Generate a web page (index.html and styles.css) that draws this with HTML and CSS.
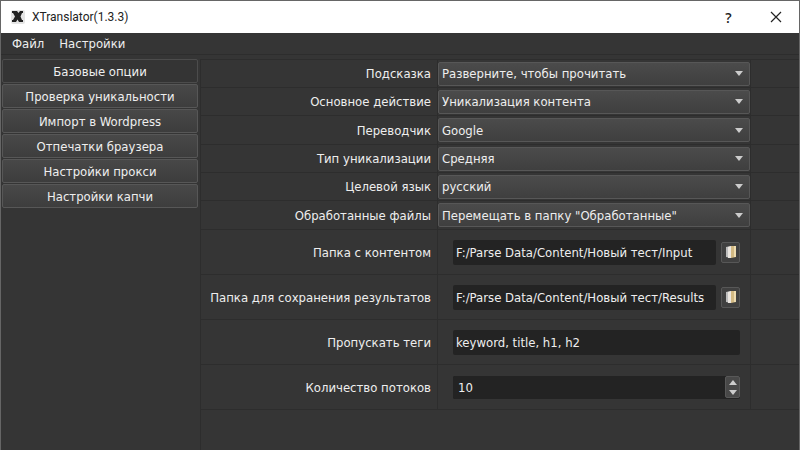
FILE: index.html
```html
<!DOCTYPE html>
<html lang="ru">
<head>
    <meta charset="UTF-8">
    <title>XTranslator(1.3.3)</title>
    <link rel="stylesheet" href="styles.css">
</head>
<body>
    <header class="titlebar">
        <svg class="logo" viewBox="0 0 14 14" aria-hidden="true">
            <rect width="14" height="14" rx="2" fill="#e4e4e4"/>
            <path d="M1 1h5l1.500 2L9 1h3v2h-1L9.500 6.500 11 10h1v2H8L6.500 9.500 5 12H1v-2h1l2-3.500L2 3H1z" fill="#222"/>
        </svg>
        <h1 class="title">XTranslator(1.3.3)</h1>
        <button class="window-button help" type="button">?</button>
        <button class="window-button" type="button" aria-label="Закрыть">
            <svg width="12" height="12" viewBox="0 0 12 12" aria-hidden="true">
                <path d="M1 1l10 10M11 1L1 11" stroke="#222" stroke-width="1.200"/>
            </svg>
        </button>
    </header>

    <nav class="menu">
        <button type="button">Файл</button>
        <button type="button">Настройки</button>
    </nav>

    <main class="content">
        <nav class="sidebar">
            <button class="tab active" type="button">Базовые опции</button>
            <button class="tab" type="button">Проверка уникальности</button>
            <button class="tab" type="button">Импорт в Wordpress</button>
            <button class="tab" type="button">Отпечатки браузера</button>
            <button class="tab" type="button">Настройки прокси</button>
            <button class="tab" type="button">Настройки капчи</button>
        </nav>

        <form class="options">
            <div class="row">
                <label for="hint">Подсказка</label>
                <div class="cell"><select id="hint"><option>Разверните, чтобы прочитать</option></select></div>
            </div>
            <div class="row">
                <label for="action">Основное действие</label>
                <div class="cell"><select id="action"><option>Уникализация контента</option></select></div>
            </div>
            <div class="row">
                <label for="translator">Переводчик</label>
                <div class="cell"><select id="translator"><option>Google</option></select></div>
            </div>
            <div class="row">
                <label for="level">Тип уникализации</label>
                <div class="cell"><select id="level"><option>Средняя</option></select></div>
            </div>
            <div class="row">
                <label for="lang">Целевой язык</label>
                <div class="cell"><select id="lang"><option>русский</option></select></div>
            </div>
            <div class="row">
                <label for="processed">Обработанные файлы</label>
                <div class="cell"><select id="processed"><option>Перемещать в папку "Обработанные"</option></select></div>
            </div>
            <div class="row tall">
                <label for="input">Папка с контентом</label>
                <div class="cell">
                    <input id="input" type="text" value="F:/Parse Data/Content/Новый тест/Input">
                    <button class="browse" type="button" aria-label="Выбрать папку">
                        <svg width="12" height="14" viewBox="0 0 12 14" aria-hidden="true">
                            <path d="M1 2l5-1v12l-5-1z" fill="#bdbdbd"/>
                            <path d="M3 2l3-1v12H3z" fill="#ebe6e0"/>
                            <path d="M6 1h5v11l-5 1z" fill="#d2b983"/>
                            <path d="M9 1h2v11H9z" fill="#eedcb0"/>
                        </svg>
                    </button>
                </div>
            </div>
            <div class="row tall">
                <label for="output">Папка для сохранения результатов</label>
                <div class="cell">
                    <input id="output" type="text" value="F:/Parse Data/Content/Новый тест/Results">
                    <button class="browse" type="button" aria-label="Выбрать папку">
                        <svg width="12" height="14" viewBox="0 0 12 14" aria-hidden="true">
                            <path d="M1 2l5-1v12l-5-1z" fill="#bdbdbd"/>
                            <path d="M3 2l3-1v12H3z" fill="#ebe6e0"/>
                            <path d="M6 1h5v11l-5 1z" fill="#d2b983"/>
                            <path d="M9 1h2v11H9z" fill="#eedcb0"/>
                        </svg>
                    </button>
                </div>
            </div>
            <div class="row tall">
                <label for="tags">Пропускать теги</label>
                <div class="cell"><input id="tags" type="text" value="keyword, title, h1, h2"></div>
            </div>
            <div class="row tall">
                <label for="threads">Количество потоков</label>
                <div class="cell">
                    <div class="spinner">
                        <input id="threads" type="number" min="1" value="10">
                        <div class="steps">
                            <button type="button" aria-label="Больше" onclick="threads.stepUp()">
                                <svg width="8" height="5" viewBox="0 0 8 5" aria-hidden="true"><path d="M4 0l4 5H0z" fill="#ccc"/></svg>
                            </button>
                            <button type="button" aria-label="Меньше" onclick="threads.stepDown()">
                                <svg width="8" height="5" viewBox="0 0 8 5" aria-hidden="true"><path d="M0 0h8L4 5z" fill="#ccc"/></svg>
                            </button>
                        </div>
                    </div>
                </div>
            </div>
        </form>
    </main>
</body>
</html>
```
FILE: styles.css
```css
* {
    box-sizing: border-box;
}
body {
    display: flex;
    flex-direction: column;
    min-height: 100vh;
    margin: 0;
    border: solid #666;
    border-width: 1px 1px 0 1px;
    background: #353535;
    color: #eee;
    font-family: "DejaVu Sans Condensed", "DejaVu Sans", sans-serif;
    font-size: 13px;
}
button, input, select {
    color: inherit;
    font: inherit;
}
button {
    padding: 0;
    border: none;
    background: none;
}

/* title bar */
.titlebar {
    display: flex;
    align-items: center;
    height: 32px;
    padding-left: 10px;
    background: #fff;
    color: #222;
}
.logo {
    width: 14px;
    height: 14px;
}
.title {
    flex: 1;
    margin: 0 0 0 7px;
    font-family: Roboto, sans-serif;
    font-size: 12px;
    font-weight: normal;
}
.window-button {
    display: flex;
    align-items: center;
    justify-content: center;
    width: 47px;
    height: 32px;
}
.help {
    font-family: "Open Sans", sans-serif;
    font-size: 14px;
    font-weight: 600;
}

/* menu */
.menu {
    display: flex;
    gap: 15px;
    height: 22px;
    padding: 0 11px;
    border-bottom: 1px solid #2d2d2d;
}

.content {
    display: flex;
    flex: 1;
    padding-top: 4px;
}

/* sidebar */
.sidebar {
    display: flex;
    flex-direction: column;
    gap: 1px;
    width: 200px;
    padding: 0 2px 0 1px;
    border-right: 1px solid #2d2d2d;
}
.tab {
    height: 24px;
    border: 1px solid #575757;
    border-radius: 2px;
    background: linear-gradient(#484848, #3d3d3d);
}
.tab.active {
    border-color: #4c4c4c;
    background: #343434;
}

/* options */
.options {
    flex: 1;
    border-top: 1px solid #2d2d2d;
}
.row {
    display: grid;
    grid-template-columns: 236px 1fr 48px;
    height: 28px;
    border-bottom: 1px solid #2d2d2d;
}
.row:nth-child(3n) {
    height: 29px;
}
.row.tall {
    height: 45px;
}
.row label {
    align-self: center;
    padding-right: 6px;
    text-align: right;
}
.cell {
    display: flex;
    align-items: center;
    gap: 5px;
    border: solid #2d2d2d;
    border-width: 0 1px;
}
.tall .cell {
    padding: 0 10px 0 15px;
}
select {
    width: 100%;
    height: 24px;
    padding: 0 3px;
    border: 1px solid #575757;
    border-radius: 2px;
    appearance: none;
    background: url("data:image/svg+xml,%3Csvg xmlns='http://www.w3.org/2000/svg' width='8' height='5'%3E%3Cpath d='M0 0h8L4 5z' fill='%23ccc'/%3E%3C/svg%3E") no-repeat right 6px center, linear-gradient(#4b4b4b, #3f3f3f);
}
.cell input {
    flex: 1;
    min-width: 0;
    height: 25px;
    padding: 0 3px;
    border: none;
    border-radius: 2px;
    background: #232323;
}
.browse {
    display: flex;
    align-items: center;
    justify-content: center;
    width: 19px;
    height: 21px;
    border: 1px solid #575757;
    border-radius: 2px;
    background: #404040;
}
.spinner {
    display: flex;
    flex: 1;
    align-items: center;
    height: 23px;
    border-radius: 2px;
    background: #232323;
}
.spinner input {
    height: 23px;
    padding-left: 5px;
    appearance: textfield;
}
.steps {
    display: flex;
    flex-direction: column;
    width: 15px;
    height: 22px;
    border: 1px solid #585858;
    border-radius: 2px;
    background: #484848;
}
.steps button {
    display: flex;
    flex: 1;
    align-items: center;
    justify-content: center;
}
```
